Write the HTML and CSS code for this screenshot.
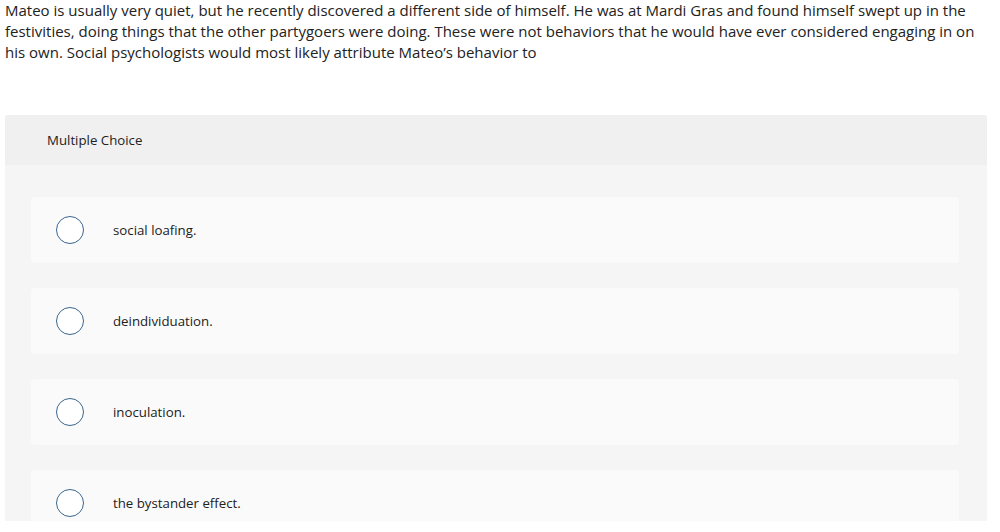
FILE: index.html
```html
<!DOCTYPE html>
<html>
<head>
<meta charset="utf-8">
<link rel="stylesheet" href="styles.css">
</head>
<body>
<div class="page">
  <p class="question">Mateo is usually very quiet, but he recently discovered a different side of himself. He was at Mardi Gras and found himself swept up in the festivities, doing things that the other partygoers were doing. These were not behaviors that he would have ever considered engaging in on his own. Social psychologists would most likely attribute Mateo’s behavior to</p>
  <div class="panel">
    <div class="panel-head">Multiple Choice</div>
    <div class="panel-body">
      <div class="option"><span class="radio"></span><span class="label">social loafing.</span></div>
      <div class="option"><span class="radio"></span><span class="label">deindividuation.</span></div>
      <div class="option"><span class="radio"></span><span class="label">inoculation.</span></div>
      <div class="option"><span class="radio"></span><span class="label">the bystander effect.</span></div>
    </div>
  </div>
</div>
</body>
</html>
```

FILE: styles.css
```css
html, body {
  margin: 0;
  padding: 0;
  background: #fff;
}
.page {
  height: 521px;
  overflow: hidden;
  padding: 0 13px 0 5px;
  font-family: "Open Sans", "Liberation Sans", sans-serif;
  color: #222;
}
.question {
  margin: 0;
  font-size: 15px;
  line-height: 21px;
  width: 990px;
}
.panel {
  margin-top: 52px;
  width: 982px;
  background: #f5f5f5;
  border-radius: 3px 3px 0 0;
}
.panel-head {
  height: 50px;
  display: flex;
  align-items: center;
  padding-left: 42px;
  background: #f0f0f0;
  font-size: 13.25px;
  border-radius: 3px 3px 0 0;
}
.panel-body {
  padding: 32px 28px 0 26px;
  display: flex;
  flex-direction: column;
  gap: 25px;
}
.option {
  height: 66px;
  background: #fafafa;
  border-radius: 4px;
  display: flex;
  align-items: center;
  padding-left: 25px;
}
.radio {
  width: 26px;
  height: 26px;
  border: 1.5px solid #3a6690;
  border-radius: 50%;
  background: #fff;
  flex: none;
}
.label {
  margin-left: 29px;
  font-size: 13.25px;
}
```
